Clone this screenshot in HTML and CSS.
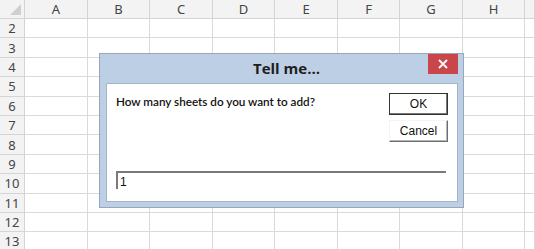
FILE: index.html
```html
<!DOCTYPE html>
<html lang="en">
<head>
    <meta charset="UTF-8">
    <title>Tell me...</title>
    <link rel="stylesheet" href="styles.css">
</head>
<body>
    <div class="sheet" id="sheet">
        <div class="corner"><span class="tri"></span></div>
    </div>

    <div class="dialog">
        <div class="titlebar">
            <span class="title">Tell me...</span>
            <button class="close" type="button">
                <svg width="10" height="10" viewBox="0 0 10 10"><path d="M1 1L9 9M9 1L1 9" stroke="#fff" stroke-width="1.8"/></svg>
            </button>
        </div>
        <div class="body">
            <div class="top-row">
                <p class="prompt">How many sheets do you want to add?</p>
                <div class="buttons">
                    <button class="btn default">OK</button>
                    <button class="btn">Cancel</button>
                </div>
            </div>
            <input class="answer" type="text" value="1">
        </div>
    </div>

    <script>
        // column headers and rows 2..13
        const sheet = document.getElementById('sheet');
        const cols = ['A', 'B', 'C', 'D', 'E', 'F', 'G', 'H', ''];
        cols.forEach(c => {
            const d = document.createElement('div');
            d.className = 'colhead';
            d.textContent = c;
            sheet.appendChild(d);
        });
        for (let r = 2; r <= 13; r++) {
            const h = document.createElement('div');
            h.className = 'rowhead';
            h.textContent = r;
            sheet.appendChild(h);
            cols.forEach(() => {
                const d = document.createElement('div');
                d.className = 'cell';
                sheet.appendChild(d);
            });
        }
    </script>
</body>
</html>
```
FILE: styles.css
```css
body {
    margin: 0;
    width: 535px;
    height: 249px;
    overflow: hidden;
    background: #fff;
    font-family: "Noto Sans", "Open Sans", sans-serif;
    position: relative;
}
.sheet {
    display: grid;
    grid-template-columns: 25px 63px 62px 63px 62px 63px 62px 63px 62px 1fr;
    grid-template-rows: 19px repeat(12, 19.4px);
}
.corner,
.colhead,
.rowhead {
    background: #f3f3f3;
    color: #444;
    font-size: 13px;
    box-sizing: border-box;
}
.corner {
    border-right: 1px solid #d4d4d4;
    border-bottom: 1px solid #d4d4d4;
    display: flex;
    align-items: flex-end;
    justify-content: flex-end;
    padding: 0 3px 3px 0;
}
.tri {
    width: 11px;
    height: 11px;
    background: #cfcfcf;
    clip-path: polygon(100% 0, 100% 100%, 0 100%);
}
.colhead {
    border-right: 1px solid #d4d4d4;
    border-bottom: 1px solid #d4d4d4;
    display: flex;
    align-items: center;
    justify-content: center;
}
.rowhead {
    border-right: 1px solid #d4d4d4;
    border-bottom: 1px solid #d4d4d4;
    display: flex;
    align-items: center;
    justify-content: center;
}
.cell {
    border-right: 1px solid #dadada;
    border-bottom: 1px solid #dadada;
    box-sizing: border-box;
}

/* dialog */
.dialog {
    position: absolute;
    left: 99px;
    top: 53px;
    width: 365px;
    height: 155px;
    box-sizing: border-box;
    background: #bdcfe5;
    border: 1px solid #97a6b8;
    padding: 0 5px 5px 6px;
    display: flex;
    flex-direction: column;
}
.titlebar {
    height: 29px;
    display: flex;
    align-items: flex-start;
    justify-content: center;
    position: relative;
}
.title {
    font-family: "Open Sans", "Noto Sans", sans-serif;
    font-weight: bold;
    font-size: 15px;
    color: #1e1e1e;
    margin-top: 4px;
    padding-left: 9px;
}
.close {
    position: absolute;
    right: 0;
    top: 0;
    width: 30px;
    height: 20px;
    border: none;
    padding: 0;
    background: #c9474a;
    display: flex;
    align-items: center;
    justify-content: center;
}
.body {
    flex: 1;
    background: #fff;
    border: 1px solid #a4b3c6;
    padding: 9px 9px 12px 9px;
    display: flex;
    flex-direction: column;
}
.top-row {
    display: flex;
    justify-content: space-between;
    flex: 1;
}
.prompt {
    margin: 0;
    margin-top: 1px;
    font-family: Lato, "Noto Sans", sans-serif;
    font-size: 11.7px;
    font-weight: 600;
    color: #111;
}
.buttons {
    display: flex;
    flex-direction: column;
    gap: 5px;
}
.btn {
    width: 59px;
    height: 22px;
    box-sizing: border-box;
    background: #fff;
    font-family: "Liberation Sans", Arial, sans-serif;
    font-size: 12px;
    color: #111;
    padding: 0;
    border: 1px solid;
    border-color: #f4f4f4 #6e6e6e #6e6e6e #f4f4f4;
    box-shadow: inset -1px -1px 0 #b5b5b5;
}
.btn.default {
    border: 1px solid #333;
    box-shadow: inset -1px -1px 0 #777, inset 1px 1px 0 #fff;
}
.answer {
    width: 330px;
    height: 18px;
    box-sizing: border-box;
    margin-left: 0;
    border: none;
    border-top: 2px solid #7a7a7a;
    border-left: 2px solid #7a7a7a;
    padding: 1px 2px 0;
    font-family: "Liberation Sans", Arial, sans-serif;
    font-size: 12px;
    color: #111;
    outline: none;
}
```
